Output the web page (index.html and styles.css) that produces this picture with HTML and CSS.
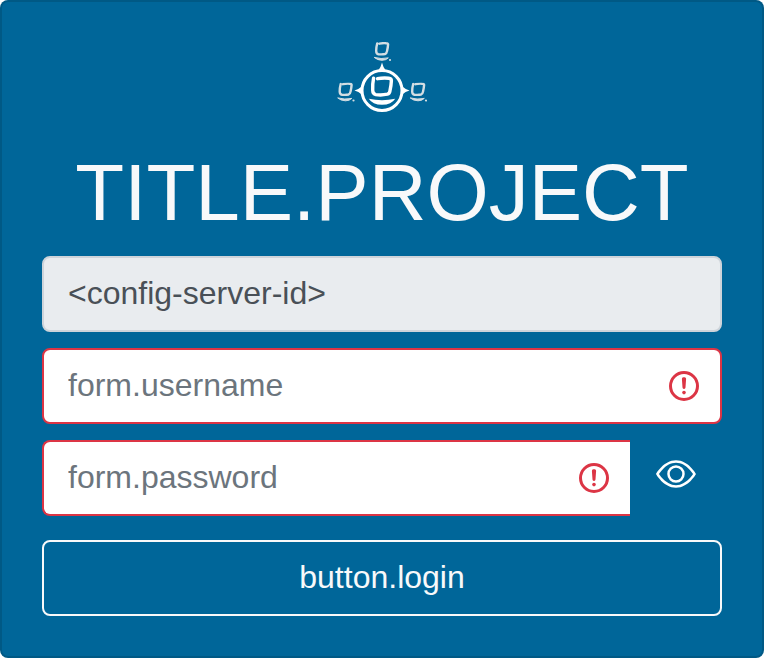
FILE: index.html
```html
<!DOCTYPE html>
<html lang="en">
<head>
<meta charset="utf-8">
<meta name="viewport" content="width=device-width, initial-scale=1">
<title>TITLE.PROJECT</title>
<link rel="stylesheet" href="styles.css">
</head>
<body>
<svg class="defs" aria-hidden="true">
  <symbol id="alert" viewBox="0 0 12 12">
    <circle cx="6" cy="6" r="4.5" fill="none" stroke="currentColor"/>
    <path d="M5.8 3.6h.4L6 6.5z" fill="currentColor" stroke="currentColor" stroke-linejoin="round"/>
    <circle cx="6" cy="8.2" r=".6" fill="currentColor"/>
  </symbol>
  <symbol id="node" viewBox="0 0 18 20">
    <path d="M3.700 1.500Q2.600 5.600 2.700 9Q2.700 11.800 5 12.200Q8.500 12.700 11.500 12Q13.200 11.500 13.500 9.200Q14.400 5.500 14.600 2.400Q14.600 1.300 12.600 1.200Q9.500 .9 6 1.700" fill="none" stroke="currentColor" stroke-width="2.400" stroke-linecap="round" stroke-linejoin="round"/>
    <path d="M.7 15.400Q7.500 17.400 14.800 15.900Q12.500 18.300 8.500 18.300Q3.800 18.200 .7 15.400z" fill="currentColor" stroke="currentColor" stroke-linejoin="round"/>
    <circle cx="16.500" cy="18" r="1.100" fill="currentColor"/>
  </symbol>
</svg>
<main class="card">
  <svg class="logo" viewBox="0 0 90 70" role="img" aria-label="Logo">
    <g class="logo-nodes">
      <use href="#node" x="36.500" y="0" width="18" height="20"/>
      <use href="#node" x="0" y="40.500" width="18" height="20"/>
      <use href="#node" x="72.500" y="40.500" width="18" height="20"/>
    </g>
    <circle cx="45" cy="48.500" r="20" fill="none" stroke="#fff" stroke-width="3"/>
    <path d="M45 20.500Q46 25 48.800 28.500H41.200Q44 25 45 20.500zM17.500 48.500Q21.500 47.500 25 44.300V52.700Q21.500 49.500 17.500 48.500zM72.500 48.500Q68.500 47.500 65 44.300V52.700Q68.500 49.500 72.500 48.500z" fill="#fff"/>
    <path d="M36.600 36.200Q35.300 42.500 35.700 48.300Q35.800 52 38.800 52.600Q44.500 53.500 50.300 52.200Q52.600 51.500 53 48.700Q54.200 43 54.400 38.700Q54.400 36.500 51.800 36.200Q46 35.500 40.500 36.700" fill="none" stroke="#fff" stroke-width="3.400" stroke-linecap="round" stroke-linejoin="round"/>
    <path d="M31.800 56.700Q45 59.600 58.200 56.700Q54.500 62.700 45 62.800Q35.500 62.700 31.800 56.700z" fill="#fff"/>
  </svg>
  <h1 class="title">TITLE.PROJECT</h1>
  <form class="form" novalidate>
    <input class="control control-disabled" type="text" aria-label="Server" value="&lt;config-server-id&gt;" disabled>
    <div class="field">
      <input class="control control-invalid" type="text" placeholder="form.username" aria-label="form.username" aria-invalid="true">
      <svg class="alert" aria-hidden="true"><use href="#alert"/></svg>
    </div>
    <div class="group">
      <div class="field">
        <input class="control control-invalid control-joined" type="password" placeholder="form.password" aria-label="form.password" aria-invalid="true">
        <svg class="alert" aria-hidden="true"><use href="#alert"/></svg>
      </div>
      <button class="reveal" type="button" aria-label="Show password">
        <svg class="eye" viewBox="0 0 16 16" fill="currentColor" aria-hidden="true">
          <path d="M16 8s-3-5.500-8-5.500S0 8 0 8s3 5.500 8 5.500S16 8 16 8M1.173 8a13 13 0 0 1 1.660-2.043C4.120 4.668 5.880 3.500 8 3.500s3.879 1.168 5.168 2.457A13 13 0 0 1 14.828 8q-.086.130-.195.288c-.335.480-.830 1.120-1.465 1.755C11.879 11.332 10.119 12.500 8 12.500s-3.879-1.168-5.168-2.457A13 13 0 0 1 1.172 8z"/>
          <path d="M8 5.500a2.500 2.500 0 1 0 0 5 2.500 2.500 0 0 0 0-5M4.500 8a3.500 3.500 0 1 1 7 0 3.500 3.500 0 0 1-7 0"/>
        </svg>
      </button>
    </div>
    <button class="login" type="submit">button.login</button>
  </form>
</main>
</body>
</html>
```
FILE: styles.css
```css
*,
*::before,
*::after {
  box-sizing: border-box;
}

body {
  margin: 0;
  background: #fff;
  font-family: "Liberation Sans", Arial, sans-serif;
  font-size: 32px;
  line-height: 48px;
}

.defs {
  position: absolute;
  width: 0;
  height: 0;
}

.card {
  display: flex;
  flex-direction: column;
  padding: 40px;
  border: 2px solid rgba(0, 0, 0, 0.125);
  border-radius: 8px;
  background: #006699;
  color: #f8f9fa;
}

.logo {
  align-self: center;
  width: 90px;
  height: 70px;
  margin-bottom: 32px;
}

.logo-nodes {
  color: #d3dee3;
}

.title {
  margin: 0 0 14px;
  font-size: 80px;
  font-weight: 400;
  line-height: 98px;
  text-align: center;
}

.form {
  display: flex;
  flex-direction: column;
  gap: 16px;
}

.group {
  display: flex;
}

.field {
  position: relative;
  flex: 1;
  min-width: 0;
}

.control {
  display: block;
  width: 100%;
  height: 76px;
  margin: 0;
  padding: 11px 24px 13px;
  border: 2px solid #ced4da;
  border-radius: 8px;
  background: #fff;
  color: #495057;
  font: inherit;
}

.control::placeholder {
  color: #6c757d;
  opacity: 1;
}

.control-disabled {
  background: #e9ecef;
}

.control-invalid {
  padding-right: 72px;
  border-color: #dc3545;
}

.control-joined {
  border-right: 0;
  border-top-right-radius: 0;
  border-bottom-right-radius: 0;
}

.alert {
  position: absolute;
  top: 20px;
  right: 20px;
  width: 36px;
  height: 36px;
  color: #dc3545;
  pointer-events: none;
}

.group .alert {
  right: 18px;
}

.reveal {
  display: flex;
  align-items: center;
  padding: 0 26px 8px;
  border: 0;
  background: transparent;
  color: #fff;
}

.eye {
  width: 40px;
  height: 40px;
}

.login {
  margin: 8px 0 0;
  padding: 11px 24px 13px;
  border: 2px solid #f8f9fa;
  border-radius: 8px;
  background: transparent;
  color: #f8f9fa;
  font: inherit;
}
```
